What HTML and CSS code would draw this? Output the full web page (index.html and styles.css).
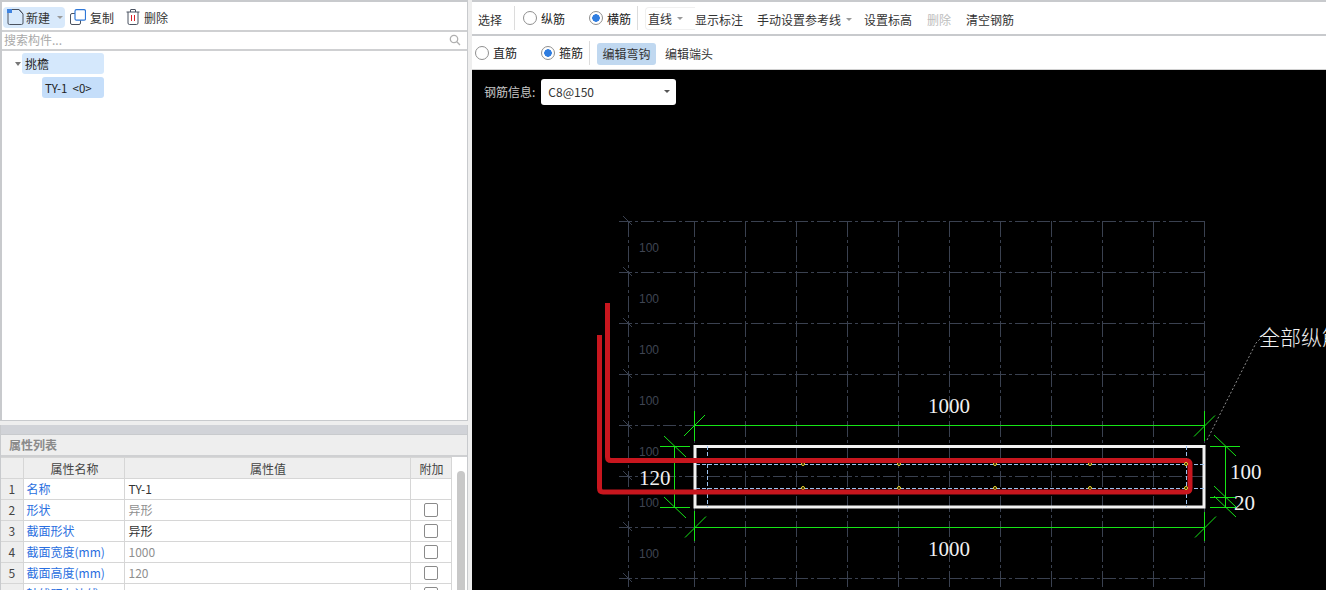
FILE: index.html
```html
<!DOCTYPE html>
<html lang="zh">
<head>
<meta charset="utf-8">
<title>挑檐</title>
<link rel="stylesheet" href="styles.css">
</head>
<body>
<div class="app">
  <aside class="left">
    <div class="tree-panel">
      <div class="left-toolbar">
        <div class="new-btn">
          <svg class="ico" width="18" height="18" viewBox="0 0 18 18"><path d="M2 4.500V15a1.500 1.500 0 0 0 1.500 1.500h12A1.500 1.500 0 0 0 17 15V6l-4-4.500H6" fill="none" stroke="#4a5260"/><path d="M13 1.500 17 6" fill="none" stroke="#4a5260"/><rect x="1" y="1" width="5" height="4" fill="#3f83e0"/></svg>
          <span class="new-label">新建</span><i class="caret"></i>
        </div>
        <div class="tool">
          <svg class="ico" width="16" height="16" viewBox="0 0 16 16"><rect x="0.500" y="4.500" width="10" height="11" rx="1.500" fill="none" stroke="#4a5260"/><rect x="5" y="0.700" width="10.500" height="10.500" rx="1.500" fill="#fff" stroke="#2f78d8" stroke-width="1.200"/></svg>
          <span>复制</span>
        </div>
        <div class="tool">
          <svg class="ico" width="14" height="16" viewBox="0 0 14 16"><path d="M0.500 3h13M2 3v11a1.500 1.500 0 0 0 1.500 1.500h7A1.500 1.500 0 0 0 12 14V3M4.500 3V1a.5.5 0 0 1 .5-.5h4a.5.5 0 0 1 .5.5v2" fill="none" stroke="#4a5260"/><path d="M5.500 6v6M8.500 6v6" stroke="#d8232a"/></svg>
          <span>删除</span>
        </div>
      </div>
      <div class="search">
        <span>搜索构件...</span>
        <svg width="12" height="12" viewBox="0 0 12 12"><circle cx="5" cy="5" r="3.700" fill="none" stroke="#b0b0b0" stroke-width="1.300"/><path d="M7.800 7.800 11 11" stroke="#b0b0b0" stroke-width="1.300"/></svg>
      </div>
      <div class="tree">
        <div class="tree-row"><i class="tree-caret"></i><span class="node node-parent">挑檐</span></div>
        <div class="tree-row child"><span class="node node-child">TY-1 &nbsp;&lt;0&gt;</span></div>
      </div>
    </div>
    <div class="props">
      <div class="props-bar"></div>
      <div class="props-title">属性列表</div>
      <div class="props-body">
        <table class="prop-table">
          <colgroup><col class="c-num"><col class="c-name"><col class="c-val"><col class="c-add"></colgroup>
          <thead><tr><th></th><th>属性名称</th><th>属性值</th><th>附加</th></tr></thead>
          <tbody>
            <tr><td class="num">1</td><td class="name">名称</td><td class="val">TY-1</td><td></td></tr>
            <tr><td class="num">2</td><td class="name">形状</td><td class="val muted">异形</td><td class="chk"><i></i></td></tr>
            <tr><td class="num">3</td><td class="name">截面形状</td><td class="val">异形</td><td class="chk"><i></i></td></tr>
            <tr><td class="num">4</td><td class="name">截面宽度(mm)</td><td class="val muted">1000</td><td class="chk"><i></i></td></tr>
            <tr><td class="num">5</td><td class="name">截面高度(mm)</td><td class="val muted">120</td><td class="chk"><i></i></td></tr>
            <tr><td class="num">6</td><td class="name">轴线距左边线</td><td class="val muted"></td><td class="chk"><i></i></td></tr>
          </tbody>
        </table>
        <div class="scroll"><div class="thumb"></div></div>
      </div>
    </div>
  </aside>
  <main class="right">
    <div class="bar bar-one">
      <span class="act first">选择</span>
      <i class="sep sep-a"></i>
      <label class="radio r-zong"><i class="dot"></i>纵筋</label>
      <label class="radio r-heng"><i class="dot on"></i>横筋</label>
      <i class="sep sep-b"></i>
      <span class="act line">直线<i class="caret"></i></span>
      <span class="act show">显示标注</span>
      <span class="act manual">手动设置参考线<i class="caret"></i></span>
      <span class="act height">设置标高</span>
      <span class="act del">删除</span>
      <span class="act clear">清空钢筋</span>
    </div>
    <div class="bar bar-two">
      <label class="radio r-zhi"><i class="dot"></i>直筋</label>
      <label class="radio r-gu"><i class="dot on"></i>箍筋</label>
      <i class="sep sep-c"></i>
      <span class="act hook">编辑弯钩</span>
      <span class="act head">编辑端头</span>
    </div>
    <div class="canvas">
      <div class="rebar-info">
        <span class="info-label">钢筋信息:</span>
        <div class="select"><span>C8@150</span><i class="caret dark"></i></div>
      </div>
      <svg class="drawing" width="854" height="520" viewBox="472 70 854 520">
        <g class="grid">
          <path class="gh" d="M619 221.500H1205M619 272.500H1205M619 323.500H1205M619 374.500H1205M619 425.500H1205M619 476.500H1205M619 527.500H1205M619 578.500H1205"/>
          <path class="gv" d="M628.500 221V590M694.500 221V590M745.500 221V590M796.500 221V590M847.500 221V590M898.500 221V590M949.500 221V590M1000.500 221V590M1051.500 221V590M1102.500 221V590M1153.500 221V590M1204.500 221V590"/>
          <path class="gt" d="M623 216l9 9M623 267l9 9M623 318l9 9M623 369l9 9M623 420l9 9M623 471l9 9M623 522l9 9M623 573l9 9"/>
          <text x="639" y="252">100</text>
          <text x="639" y="303">100</text>
          <text x="639" y="354">100</text>
          <text x="639" y="405">100</text>
          <text x="639" y="456">100</text>
          <text x="639" y="507">100</text>
          <text x="639" y="558">100</text>
        </g>
        <path class="leader" d="M1207 440 1256 343 1260 339"/>
        <g class="dims">
          <path d="M694 425.500H1204M694.500 411V441M684 436l21-21M1204.500 411V441M1194 436.500l21-21"/>
          <path d="M694 527.500H1204M694.500 511V541M685 537.500l21-21M1204.500 512V541M1195 537.500l21-21"/>
          <path d="M674.500 446V507M660 446.500H690M660 507.500H690M664 436l22 21M664 497l22 21"/>
          <path d="M1225.500 446V507M1210 446.500H1240M1210 497.500H1236M1210 507.500H1236M1214 435l22 21M1214 486l22 21M1214 496l22 21"/>
        </g>
        <rect class="outline" x="695" y="446.500" width="509" height="60.500"/>
        <path class="inner" d="M696 464.500H1204M696 488.500H1204M707.500 446V507M1186.500 446V507"/>
        <g class="nodes">
          <circle cx="803" cy="464" r="1.500"/><circle cx="899" cy="464" r="1.500"/><circle cx="995" cy="464" r="1.500"/><circle cx="1090" cy="464" r="1.500"/>
          <circle cx="803" cy="488" r="1.500"/><circle cx="899" cy="488" r="1.500"/><circle cx="995" cy="488" r="1.500"/><circle cx="1090" cy="488" r="1.500"/>
        </g>
        <path class="rebar" d="M607.500 303V457Q607.500 460.500 611 460.500H1186Q1190 460.500 1190 464.500V488Q1190 492 1186 492H603Q599.500 492 599.500 488V335"/>
        <g class="nodes">
          <circle cx="1186" cy="464" r="1.500"/><circle cx="1186" cy="488" r="1.500"/>
        </g>
        <g class="labels">
          <text x="928" y="413">1000</text>
          <text x="928" y="556">1000</text>
          <text x="639" y="485">120</text>
          <text x="1230" y="479">100</text>
          <text x="1234" y="510">20</text>
          <text class="cjk" x="1259" y="345">全部纵筋</text>
        </g>
      </svg>
    </div>
  </main>
</div>
</body>
</html>
```
FILE: styles.css
```css
* { box-sizing: border-box; }
html, body { margin: 0; height: 100%; overflow: hidden; }
body {
  background: #eeeeee;
  font: 12px "Noto Sans CJK SC", "Liberation Sans", sans-serif;
  color: #333;
}
i { display: block; font-style: normal; }
.app { display: flex; width: 1326px; height: 590px; gap: 4px; }

/* Left column */
.left { width: 468px; display: flex; flex-direction: column; gap: 4px; flex: none; }
.tree-panel {
  height: 421px; background: #fff;
  border: 1px solid #c8cacd; border-width: 2px 1px 1px 2px;
  display: flex; flex-direction: column;
}
.left-toolbar { height: 28px; display: flex; align-items: center; padding: 2px 0 0 1px; }
.new-btn {
  display: flex; align-items: center; width: 62px; height: 21px;
  background: #d8e9fb; border-radius: 4px; padding-left: 3px; margin-right: 5px;
}
.new-label { margin-left: 2px; }
.new-btn .caret { margin-left: 7px; }
.tool { display: flex; align-items: center; gap: 4px; margin-right: 12px; }
.ico { flex: none; }
.caret {
  display: inline-block; width: 0; height: 0;
  border: 3px solid transparent; border-top: 3px solid #9a9a9a; border-bottom: 0;
}
.caret.dark { border-top-color: #555; }
.search {
  height: 21px; display: flex; align-items: center; justify-content: space-between;
  padding: 0 6px 2px 2px; color: #a9a9a9;
  border-top: 2px solid #cfd0d2; border-bottom: 2px solid #cfd0d2;
}
.tree { flex: 1; padding-top: 2px; }
.tree-row { display: flex; align-items: center; height: 21px; margin-bottom: 3px; padding-left: 13px; }
.tree-row.child { padding-left: 40px; }
.tree-caret {
  width: 0; height: 0; margin-right: 1px;
  border: 3px solid transparent; border-top: 4px solid #777; border-bottom: 0;
}
.node { display: flex; align-items: center; height: 21px; width: 82px; padding-left: 3px; border-radius: 3px; color: #222; }
.node-parent { background: #d5e8fc; }
.node-child { background: #c5defa; width: 62px; font-size: 11.500px; }

/* Properties */
.props { flex: 1; display: flex; flex-direction: column; min-height: 0; border-left: 1px solid #c8cacd; border-right: 1px solid #c8cacd; background: #fff; }
.props-bar { height: 9px; background: #d1d3d8; flex: none; }
.props-title {
  height: 23px; flex: none; background: #eeeeee; color: #8a8a8a; font-weight: 700;
  display: flex; align-items: center; padding: 0 0 2px 8px;
  border-top: 1px solid #c8cacd; border-bottom: 2px solid #cfd0d2;
}
.props-body { display: flex; flex: 1; min-height: 0; overflow: hidden; }
.prop-table { width: 450px; flex: none; border-collapse: collapse; table-layout: fixed; align-self: flex-start; }
.c-num { width: 22px; } .c-name { width: 101px; } .c-val { width: 286px; } .c-add { width: 41px; }
.prop-table th, .prop-table td {
  height: 21px; padding: 0 3px 2px; border: 1px solid #d6d6d6; font-weight: 400; white-space: nowrap; overflow: hidden;
}
.prop-table th { background: #eeeeee; color: #444; text-align: center; padding: 0 2px 0 4px; }
.prop-table tr > :first-child { border-left: 0; }
.prop-table .num { background: #eeeeee; text-align: center; color: #444; }
.prop-table .name { color: #2a6fe0; }
.prop-table .val { padding-left: 4px; }
.prop-table .muted { color: #8f8f8f; }
.prop-table .chk { padding: 0 3px; }
.prop-table .chk i { width: 14px; height: 14px; margin: 0 auto; background: #fff; border: 1px solid #8a8a8a; border-radius: 2px; }
.scroll { flex: 1; padding: 14px 0 0 5px; }
.thumb { width: 8px; height: 200px; background: #c8c8c8; border-radius: 4px; }

/* Right column */
.right { flex: 1; display: flex; flex-direction: column; min-width: 0; }
.bar { background: #fff; display: flex; align-items: center; flex: none; position: relative; }
.bar-one { height: 36px; border-top: 2px solid #c8cacd; border-bottom: 2px solid #c8cacd; }
.bar-two { height: 34px; border-bottom: 1px solid #d0d0d0; }
.act { color: #333; white-space: nowrap; display: inline-flex; align-items: center; }
.bar-one .act { margin-top: 2px; }
.sep { width: 1px; height: 24px; background: #dcdcdc; flex: none; }
.radio { display: inline-flex; align-items: center; gap: 4px; color: #222; white-space: nowrap; }
.dot { width: 14px; height: 14px; border-radius: 50%; border: 1px solid #8f8f8f; background: #fff; flex: none; }
.dot.on { background: radial-gradient(circle, #2f7de0 0 3.500px, #fff 4px); }
.first { margin-left: 6px; }
.sep-a { margin-left: 12px; }
.r-zong { margin-left: 8px; }
.r-heng { margin-left: 24px; }
.sep-b { margin-left: 6px; }
.line {
  margin-left: 7px; padding-left: 2px; width: 50px; height: 23px;
  border: 1px solid #f0f0f0; border-right: 0; border-radius: 4px 0 0 4px;
}
.bar-one .line { margin-top: 0; }
.line .caret, .manual .caret { margin-left: 5px; }
.manual { margin-left: 14px; width: 107px; }
.del { margin-left: 15px; color: #bdbdbd; }
.clear { margin-left: 15px; }
.r-zhi { margin-left: 3px; }
.r-gu { margin-left: 24px; }
.sep-c { margin-left: 6px; }
.hook { margin: 2px 0 0 7px; height: 22px; width: 59px; justify-content: center; background: #c0d8f0; border-radius: 3px; }
.head { margin: 2px 0 0 9px; }

/* Canvas */
.canvas { flex: 1; background: #000; position: relative; overflow: hidden; }
.drawing { display: block; }
.rebar-info { position: absolute; left: 12px; top: 9px; display: flex; align-items: center; gap: 6px; }
.info-label { color: #c8c8c8; padding-bottom: 2px; }
.select {
  width: 135px; height: 26px; background: #fff; border-radius: 3px; color: #333;
  display: flex; align-items: center; justify-content: space-between; padding: 0 6px 2px 7px;
}
.gh, .gv { fill: none; stroke: #3a4150; stroke-width: 1; }
.gh { stroke-dasharray: 13 3 3 3; }
.gv { stroke-dasharray: 16 3 3 3; }
.gt { stroke: #3a4150; stroke-width: 1; fill: none; }
.grid text { fill: #3f4552; font: 12px "Liberation Sans", sans-serif; }
.leader { fill: none; stroke: #8c8c8c; stroke-dasharray: 2 2; }
.dims path { fill: none; stroke: #16e516; stroke-width: 1; }
.outline { fill: none; stroke: #f2f2f2; stroke-width: 3; }
.inner { fill: none; stroke: #9cc2ee; stroke-dasharray: 4 2; }
.rebar { fill: none; stroke: #c8161e; stroke-width: 5; }
.nodes circle { fill: #000; stroke: #f5e030; stroke-width: 1; }
.labels text { fill: #f0f0f0; font: 21px "Liberation Serif", serif; }
.labels .cjk { font: 21px "Noto Sans CJK SC", sans-serif; font-weight: 300; }
```
